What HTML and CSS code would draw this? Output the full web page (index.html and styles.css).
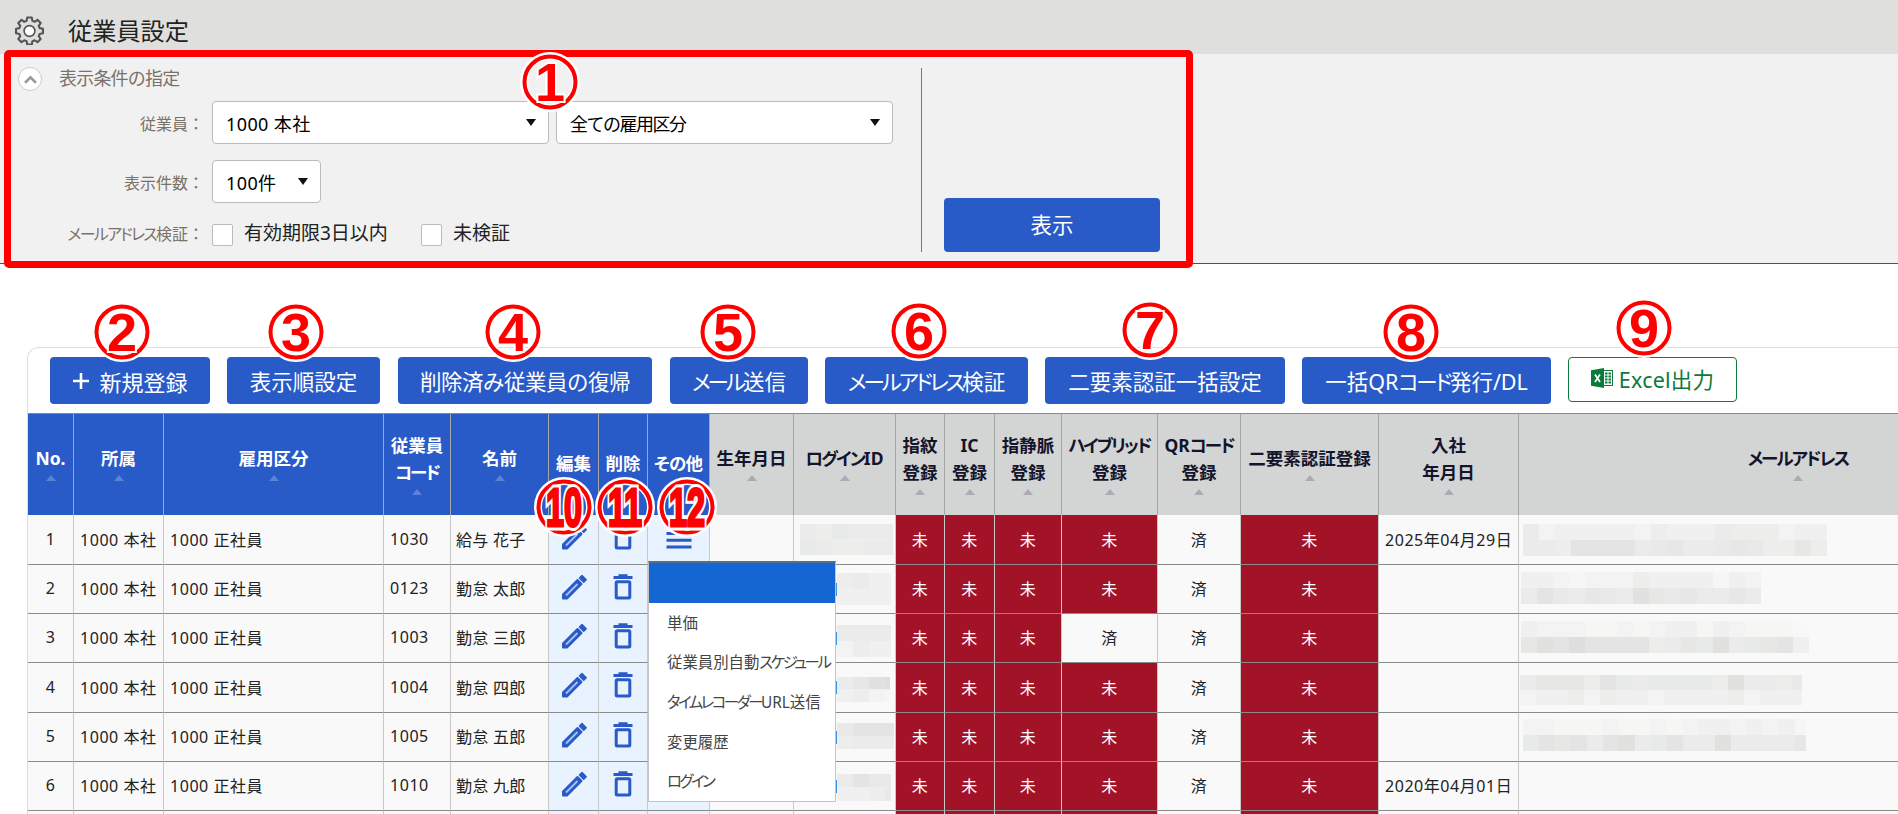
FILE: index.html
```html
<!DOCTYPE html>
<html lang="ja">
<head>
  <meta charset="UTF-8">
  <meta name="viewport" content="width=device-width, initial-scale=1.0">
  <title>従業員設定</title>
  <link rel="stylesheet" href="styles.css">
</head>
<body>
  <header class="page-header">
    <svg class="gear" viewBox="0 0 28 28">
      <path d="M11.8 1.500h4.400l.6 3.200 2.200.9 2.700-1.900 3.100 3.100-1.900 2.700.9 2.200 3.200.6v4.400l-3.200.6-.9 2.200 1.900 2.700-3.100 3.100-2.700-1.900-2.200.9-.6 3.200h-4.400l-.6-3.200-2.200-.9-2.700 1.900-3.100-3.100 1.900-2.700-.9-2.200-3.200-.6v-4.400l3.200-.6.9-2.200-1.900-2.700 3.100-3.100 2.700 1.900 2.200-.9z"/>
      <circle cx="14" cy="14.500" r="5.200"/>
    </svg>
    <h1>従業員設定</h1>
  </header>

  <section class="filter">
    <div class="conditions">
      <div class="filter-title">
        <span class="toggle"><svg viewBox="0 0 12 8"><path d="M1 7l5-5 5 5"/></svg></span>
        <span>表示条件の指定</span>
      </div>
      <div class="field first">
        <label>従業員：</label>
        <div class="select wide"><span class="num">1000 本社</span><i></i></div>
        <div class="select wide second"><span>全ての雇用区分</span><i></i></div>
      </div>
      <div class="field">
        <label>表示件数：</label>
        <div class="select short"><span class="num">100件</span><i></i></div>
      </div>
      <div class="field checks">
        <label><span class="kana">メールアドレス</span>検証：</label>
        <span class="check"></span><span class="check-text wide-text">有効期限3日以内</span>
        <span class="check"></span><span class="check-text">未検証</span>
      </div>
    </div>
    <div class="submit">
      <button class="btn show">表示</button>
    </div>
  </section>

  <main class="list">
    <div class="toolbar">
      <button class="btn b1"><svg class="plus" viewBox="0 0 18 18"><path d="M9 1v16M1 9h16"/></svg>新規登録</button>
      <button class="btn b2">表示順設定</button>
      <button class="btn b3">削除済み従業員の復帰</button>
      <button class="btn b4"><span class="kana">メール</span>送信</button>
      <button class="btn b5"><span class="kana">メールアドレス</span>検証</button>
      <button class="btn b6">二要素認証一括設定</button>
      <button class="btn b7">一括QR<span class="kana">コード</span>発行/DL</button>
      <button class="btn excel">
        <svg viewBox="0 0 22 20">
          <rect x="12" y="2.500" width="9.500" height="15" fill="#fff" stroke="#0b7a3a"/>
          <path d="M14 5.500h6M14 8.500h6M14 11.500h6M14 14.500h6" stroke="#0b7a3a" stroke-width="2" stroke-dasharray="2.500 1"/>
          <path d="M0 2.200L13 0v20L0 17.800z" fill="#0b7a3a"/>
          <path d="M4 6.500l5 7.500M9 6.500l-5 7.500" stroke="#fff" stroke-width="1.700"/>
        </svg>
        <span>Excel出力</span>
      </button>
    </div>

    <table>
      <colgroup id="cols"></colgroup>
      <thead>
        <tr>
          <th class="main">No.<i></i></th>
          <th class="main">所属<i></i></th>
          <th class="main">雇用区分<i></i></th>
          <th class="main">従業員<br><span class="kana">コード</span><i></i></th>
          <th class="main">名前<i></i></th>
          <th class="main">編集</th>
          <th class="main">削除</th>
          <th class="main"><span class="kana loose">その</span>他</th>
          <th>生年月日<i></i></th>
          <th><span class="kana">ログイン</span>ID<i></i></th>
          <th>指紋<br>登録<i></i></th>
          <th>IC<br>登録<i></i></th>
          <th>指静脈<br>登録<i></i></th>
          <th><span class="kana">ハイブリッド</span><br>登録<i></i></th>
          <th>QR<span class="kana">コード</span><br>登録<i></i></th>
          <th>二要素認証登録<i></i></th>
          <th>入社<br>年月日<i></i></th>
          <th class="mail"><span class="kana">メールアドレス</span><i></i></th>
        </tr>
      </thead>
      <tbody id="rows"></tbody>
    </table>
  </main>

  <ul class="menu">
    <li class="active"></li>
    <li>単価</li>
    <li>従業員別自動<span class="kana">スケジュール</span></li>
    <li><span class="kana">タイムレコーダー</span>URL送信</li>
    <li>変更履歴</li>
    <li><span class="kana">ログイン</span></li>
  </ul>

  <div class="frame"></div>
  <div id="badges"></div>

  <script src="app.js"></script>
</body>
</html>
```
FILE: styles.css
```css
* {
  box-sizing: border-box;
}

body {
  margin: 0;
  width: 1898px;
  height: 814px;
  overflow: hidden;
  position: relative;
  background: #fff;
  color: #222;
  font-family: "Noto Sans", "Noto Sans CJK JP", sans-serif;
  font-size: 16px;
}

.kana {
  font-feature-settings: "palt";
  letter-spacing: -0.11em;
}

.kana.loose {
  letter-spacing: -0.04em;
}

/* header */
.page-header {
  height: 54px;
  display: flex;
  align-items: center;
  padding: 7px 0 0 15px;
  background: #dfdfdd;
}

.gear {
  width: 29px;
  height: 29px;
  fill: none;
  stroke: #555;
  stroke-width: 2;
  stroke-linejoin: round;
}

.gear circle {
  fill: #fff;
  stroke-width: 1.6;
}

h1 {
  margin: 0 0 0 24px;
  font-size: 24.2px;
  line-height: 30px;
  font-weight: 400;
}

/* filter */
.filter {
  height: 210px;
  display: flex;
  background: #f1f1f1;
  border-bottom: 1px solid #2b55a0;
}

.conditions {
  width: 922px;
  height: 184px;
  margin-top: 14px;
  border-right: 1px solid #777;
}

.filter-title {
  display: flex;
  align-items: center;
  height: 22px;
  padding-left: 18px;
  font-size: 18px;
  letter-spacing: -0.8px;
  color: #7a7168;
}

.filter-title span:last-child {
  margin-top: -5px;
}

.toggle {
  display: flex;
  align-items: center;
  justify-content: center;
  width: 24px;
  height: 24px;
  margin-right: 17px;
  border: 1px solid #ccc;
  border-radius: 50%;
  background: #fff;
}

.toggle svg {
  width: 13px;
  height: 9px;
  fill: none;
  stroke: #999;
  stroke-width: 2.4;
}

.field {
  display: flex;
  align-items: center;
  height: 43px;
  margin-top: 16px;
}

.field.first {
  margin-top: 11px;
}

.field.checks {
  height: 22px;
  margin-top: 21px;
}

.field label {
  width: 204px;
  margin-right: 8px;
  text-align: right;
  color: #7a7168;
}

.checks label {
  line-height: 20px;
  margin-top: -2px;
}

.select {
  display: flex;
  align-items: center;
  justify-content: space-between;
  height: 43px;
  padding: 0 12px 0 13px;
  border: 1px solid #bbb;
  border-radius: 4px;
  background: #fff;
  color: #000;
  font-size: 18px;
}

.num {
  letter-spacing: 0.4px;
}

.select i {
  border: 5.5px solid transparent;
  border-top: 7px solid #111;
  border-bottom: 0;
}

.wide {
  width: 337px;
}

.second {
  margin-left: 7px;
  letter-spacing: -1.5px;
}

.short {
  width: 109px;
}

.check {
  width: 21px;
  height: 22px;
  border: 1px solid #bbb;
  border-radius: 2px;
  background: #fff;
}

.check-text {
  margin-left: 11px;
  font-size: 19px;
  line-height: 22px;
  margin-top: -4px;
}

.wide-text {
  width: 177px;
}

.submit {
  display: flex;
  align-items: flex-end;
  height: 198px;
  padding-left: 22px;
}

.btn {
  display: flex;
  align-items: center;
  justify-content: center;
  height: 47px;
  padding: 0;
  border: 0;
  border-radius: 4px;
  background: #285ac8;
  color: #fff;
  font-family: inherit;
  font-size: 21.5px;
  white-space: nowrap;
}

.show {
  width: 216px;
  height: 54px;
  padding-bottom: 3px;
}

/* list */
.list {
  margin: 83px 0 0 27px;
  border: 1px solid #ddd;
  border-right: 0;
  border-bottom: 0;
  border-radius: 12px 0 0 0;
}

.toolbar {
  display: flex;
  gap: 17px;
  height: 65px;
  padding: 9px 0 0 22px;
}

.b1 { width: 160px; }
.b2 { width: 153px; }
.b3 { width: 254px; margin-left: 1px; }
.b4 { width: 138px; margin-left: 1px; }
.b5 { width: 203px; }
.b6 { width: 240px; }
.b7 { width: 249px; }

.b1 {
  font-size: 22px;
}

.b3 {
  letter-spacing: -0.5px;
}

.b4 .kana,
.b5 .kana {
  letter-spacing: -0.14em;
}

.plus {
  width: 18px;
  height: 18px;
  margin-right: 9px;
  stroke: #fff;
  stroke-width: 2.6;
}

.excel {
  width: 169px;
  height: 45px;
  padding-bottom: 3px;
  border: 1px solid #0b7a3a;
  background: #fff;
  color: #0b7a3a;
  gap: 6px;
  font-size: 21.5px;
}

.excel svg {
  width: 22px;
  height: 20px;
}

.excel span {
  letter-spacing: 0.2px;
}

table {
  width: 1870px;
  table-layout: fixed;
  border-collapse: separate;
  border-spacing: 0;
  border-top: 1px solid #888;
}

th {
  height: 101px;
  padding: 0;
  border-right: 1px solid #a5a7a7;
  background: #d3d5d4;
  color: #14142b;
  font-size: 17.5px;
  line-height: 27px;
  white-space: nowrap;
  padding-bottom: 2px;
}

th i {
  display: block;
  width: 0;
  margin: 3px auto 1px;
  border: 5.5px solid transparent;
  border-bottom: 6px solid #abacb2;
  border-top: 0;
}

th.main {
  background: #285ac8;
  color: #fff;
}

th.main i {
  border-bottom-color: #5c82d8;
}

/* the mail column goes on past the window */
th.mail {
  padding-left: 179px;
  border-right: 0;
}

td {
  height: 49px;
  padding: 0 0 2px 6px;
  border-right: 1px solid #c8c8c8;
  border-bottom: 1px solid #8a8a8a;
  background: #f9f9f9;
  white-space: nowrap;
  letter-spacing: 0.55px;
}

td:last-child {
  border-right: 0;
}

tr.tall td {
  height: 50px;
}

tr.tail td {
  height: 3px;
  padding: 0;
  border-bottom: 0;
}

td.name {
  padding-left: 5px;
  letter-spacing: 0.3px;
}

td.center,
td.no,
td.icon {
  padding: 0 0 2px;
  text-align: center;
}

td.icon {
  background: #e9f2ff;
}

td.icon svg {
  display: block;
  margin: -3px auto 0;
}

td.yet {
  background: #a31328;
  color: #fff;
}

td.mask {
  padding: 0;
  vertical-align: top;
}

td.mask svg {
  display: block;
}

/* popup menu */
.menu {
  position: absolute;
  left: 648px;
  top: 561px;
  width: 188px;
  height: 241px;
  margin: 0;
  padding: 0;
  list-style: none;
  background: #fff;
  border: 1px solid #c4c4c4;
  border-top: 2px solid #55708c;
  color: #444;
  font-size: 15.4px;
}

.menu li {
  height: 39.7px;
  line-height: 41px;
  padding-left: 18px;
  white-space: nowrap;
}

.menu .kana {
  letter-spacing: -0.16em;
}

.menu .active {
  background: #1467d3;
}

/* numbered markers */
.frame {
  position: absolute;
  left: 4px;
  top: 50px;
  width: 1189px;
  height: 218px;
  border: 7px solid #f00;
  border-radius: 5px;
}

.badge {
  position: absolute;
  width: 62px;
  height: 62px;
  transform: translate(-50%, -50%);
}

.badge text {
  font-family: "Liberation Sans", sans-serif;
  font-weight: bold;
  font-size: 54px;
  text-anchor: middle;
  fill: #f00;
  stroke: #fff;
  stroke-width: 4;
  paint-order: stroke;
}

/* two digits are squeezed, so the strokes are thickened again */
.badge .halo {
  stroke-width: 9;
}

.badge .pair {
  stroke: #f00;
  stroke-width: 3;
}
```
FILE: app.js
```javascript
const widths = [46, 90, 220, 67, 98, 50, 49, 62, 84, 102, 49, 50, 67, 96, 83, 138, 140, 379];

const people = [
  { code: "1030", name: "給与 花子", date: "2025年04月29日" },
  { code: "0123", name: "勤怠 太郎", date: "" },
  { code: "1003", name: "勤怠 三郎", date: "", hybrid: true },
  { code: "1004", name: "勤怠 四郎", date: "" },
  { code: "1005", name: "勤怠 五郎", date: "" },
  { code: "1010", name: "勤怠 九郎", date: "2020年04月01日" }
];

// masked values: left, top, width, height and two rows of grey levels
const logins = [
  [6, 9, 93, 31, "bcabbb", "abccbb"],
  [43, 8, 54, 32, "cbdd", "dddd"],
  [43, 11, 54, 32, "bbbb", "ecdd"],
  [43, 14, 53, 25, "b975", "dcef"],
  [43, 10, 57, 26, "a888", "cbbb"],
  [43, 12, 54, 27, "b8aa", "ddca"]
];
const mails = [
  [4, 9, 304, 32, "bedddddecdddbcccedd", "bbc8888ba9bba9acc9c"],
  [2, 7, 240, 32, "ddefeeecddddfde", "b8ab9ab69a9bb9b"],
  [2, 7, 288, 32, "deeeffefeddfdefffg", "97858888cb9a6ba98d"],
  [1, 12, 282, 30, "b999c8abaaaac7bbca", "eddcecddeddddceddd"],
  [4, 6, 283, 32, "eefffeffefeddededf", "a898b87ba8bb7bbbb9"]
];

const greys = { 5: "#dedede", 6: "#e2e1e0", 7: "#e1e1e0", 8: "#e4e4e4", 9: "#e7e7e6", a: "#e8e9e9", b: "#ebebeb", c: "#ededec", d: "#f0f0f0", e: "#f3f3f3", f: "#f6f6f5", g: "#f8f8f8" };

const pencil = '<svg width="28" height="28" viewBox="0 0 28 28"><path d="M3 21.500L17.500 7l4 4L7 25.500H3z" fill="#285ac8" stroke="#285ac8" stroke-width="2" stroke-linejoin="round"/><path d="M6 22.500L17.500 11" stroke="#a9c2f2" stroke-width="1.800"/><path d="M19.500 5l2.500-2.500 4.200 4.200-2.500 2.500z" fill="#285ac8" stroke="#285ac8" stroke-width="1.500" stroke-linejoin="round"/></svg>';
const trash = '<svg width="20" height="26" viewBox="0 0 20 26"><path d="M.5 3.500h19M5.500 1.700h9" stroke="#285ac8" stroke-width="3"/><rect x="3.200" y="7.700" width="13.600" height="16.300" rx="1" fill="none" stroke="#285ac8" stroke-width="3"/></svg>';
const lines = '<svg width="26" height="26" viewBox="0 0 26 26"><path d="M.5 9.500h25M.5 16.300h25M.5 23h25" stroke="#285ac8" stroke-width="3"/></svg>';

function mosaic(m, sliver) {
  if (!m) return "";
  const [x, y, w, h, top, bottom] = m;
  let out = `<svg width="${x + w}" height="${y + h}">`;
  [top, bottom].forEach((row, r) => {
    for (let i = 0; i < row.length && i * 16 < w; i++) {
      const cw = Math.min(16, w - i * 16);
      out += `<rect x="${x + i * 16}" y="${y + r * h / 2}" width="${cw}" height="${h / 2}" fill="${greys[row[i]]}"/>`;
    }
  });
  if (sliver) out += `<rect x="42" y="18" width="1" height="13" fill="#3f94e0"/>`;
  return out + "</svg>";
}

function state(done) {
  return done ? '<td class="center">済</td>' : '<td class="center yet">未</td>';
}

document.getElementById("cols").innerHTML = widths.map(w => `<col style="width:${w}px">`).join("");

const tail = widths.map((w, i) => {
  let name = "";
  if (i >= 5 && i <= 7) name = "icon";
  if ((i >= 10 && i <= 13) || i == 15) name = "yet";
  return `<td class="${name}"></td>`;
}).join("");

document.getElementById("rows").innerHTML = people.map((p, i) => `
  <tr class="${i == 0 || i == 3 ? "tall" : ""}">
    <td class="no">${i + 1}</td>
    <td>1000 本社</td>
    <td>1000 正社員</td>
    <td>${p.code}</td>
    <td class="name">${p.name}</td>
    <td class="icon">${pencil}</td>
    <td class="icon">${trash}</td>
    <td class="icon">${lines}</td>
    <td></td>
    <td class="mask">${mosaic(logins[i], i > 0)}</td>
    ${state(false)}${state(false)}${state(false)}${state(p.hybrid)}${state(true)}${state(false)}
    <td>${p.date}</td>
    <td class="mask">${mosaic(mails[i])}</td>
  </tr>`).join("") + `<tr class="tail">${tail}</tr>`;

// number, center x, center y
const badges = [
  [1, 550, 81.5], [2, 122, 332], [3, 296, 332], [4, 513, 332],
  [5, 728, 332], [6, 919, 331], [7, 1150, 330], [8, 1411, 332],
  [9, 1644, 328], [10, 564, 506.5], [11, 625, 506.5], [12, 687, 506.5]
];

function digits(n) {
  if (n < 10) return `<text y="19">${n}</text>`;
  return `<g transform="scale(0.6 1)"><text class="halo" y="19">${n}</text><text class="pair" y="19">${n}</text></g>`;
}

document.getElementById("badges").innerHTML = badges.map(([n, x, y]) => `
  <svg class="badge" viewBox="-31 -31 62 62" style="left:${x}px;top:${y}px">
    <circle r="26" fill="none" stroke="#fff" stroke-width="8"/>
    <circle r="25.5" fill="none" stroke="#f00" stroke-width="4"/>
    ${digits(n)}
  </svg>`).join("");
```
